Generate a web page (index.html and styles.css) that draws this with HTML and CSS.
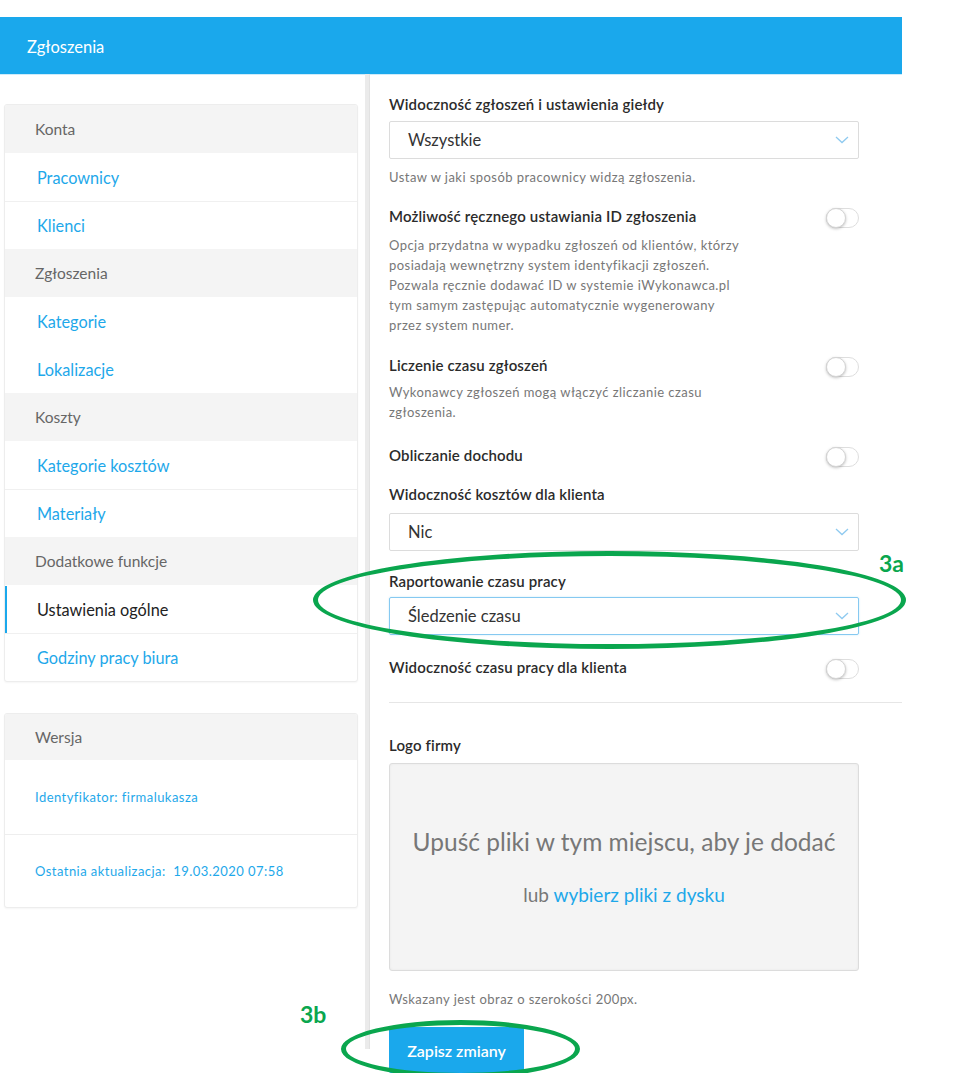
FILE: index.html
```html
<!DOCTYPE html>
<html lang="pl">
<head>
    <meta charset="UTF-8">
    <meta name="viewport" content="width=device-width, initial-scale=1.0">
    <title>Ustawienia ogólne</title>
    <link rel="stylesheet" href="styles.css">
</head>
<body>
<div class="page">
    <div class="topbar">Zgłoszenia</div>

    <div class="layout">
        <aside class="sidebar">
            <div class="card">
                <div class="nav-head">Konta</div>
                <a class="nav-link">Pracownicy</a>
                <a class="nav-link">Klienci</a>
                <div class="nav-head">Zgłoszenia</div>
                <a class="nav-link">Kategorie</a>
                <a class="nav-link no-line">Lokalizacje</a>
                <div class="nav-head">Koszty</div>
                <a class="nav-link">Kategorie kosztów</a>
                <a class="nav-link">Materiały</a>
                <div class="nav-head">Dodatkowe funkcje</div>
                <a class="nav-link active">Ustawienia ogólne</a>
                <a class="nav-link">Godziny pracy biura</a>
            </div>

            <div class="card version">
                <div class="nav-head">Wersja</div>
                <div class="info-row">Identyfikator: firmalukasza</div>
                <div class="info-row">Ostatnia aktualizacja:&nbsp; 19.03.2020 07:58</div>
            </div>
        </aside>

        <div class="divider"></div>

        <main class="main">
            <div class="label">Widoczność zgłoszeń i ustawienia giełdy</div>
            <div class="select s-first">
                <span>Wszystkie</span>
                <svg class="chevron" width="14" height="8" viewBox="0 0 14 8"><path d="M1 1l6 5.5L13 1" fill="none" stroke="#8fcaf0" stroke-width="1.3"/></svg>
            </div>
            <p class="desc help">Ustaw w jaki sposób pracownicy widzą zgłoszenia.</p>

            <div class="setting s-id">
                <div class="label">Możliwość ręcznego ustawiania ID zgłoszenia</div>
                <span class="toggle"></span>
            </div>
            <p class="desc">Opcja przydatna w wypadku zgłoszeń od klientów, którzy<br>posiadają wewnętrzny system identyfikacji zgłoszeń.<br>Pozwala ręcznie dodawać ID w systemie iWykonawca.pl<br>tym samym zastępując automatycznie wygenerowany<br>przez system numer.</p>

            <div class="setting s-time">
                <div class="label">Liczenie czasu zgłoszeń</div>
                <span class="toggle"></span>
            </div>
            <p class="desc desc-short">Wykonawcy zgłoszeń mogą włączyć zliczanie czasu<br>zgłoszenia.</p>

            <div class="setting s-income">
                <div class="label">Obliczanie dochodu</div>
                <span class="toggle"></span>
            </div>

            <div class="label s-costs">Widoczność kosztów dla klienta</div>
            <div class="select s-costs-select">
                <span>Nic</span>
                <svg class="chevron" width="14" height="8" viewBox="0 0 14 8"><path d="M1 1l6 5.5L13 1" fill="none" stroke="#8fcaf0" stroke-width="1.3"/></svg>
            </div>

            <div class="label s-report">Raportowanie czasu pracy</div>
            <div class="select focused s-report-select">
                <span>Śledzenie czasu</span>
                <svg class="chevron" width="14" height="8" viewBox="0 0 14 8"><path d="M1 1l6 5.5L13 1" fill="none" stroke="#8fcaf0" stroke-width="1.3"/></svg>
            </div>

            <div class="setting s-worktime">
                <div class="label">Widoczność czasu pracy dla klienta</div>
                <span class="toggle"></span>
            </div>

            <hr class="rule">

            <div class="label s-logo">Logo firmy</div>
            <div class="dropzone">
                <div class="drop-title">Upuść pliki w tym miejscu, aby je dodać</div>
                <div class="drop-sub">lub <a>wybierz pliki z dysku</a></div>
            </div>
            <p class="desc s-hint">Wskazany jest obraz o szerokości 200px.</p>

            <button class="btn">Zapisz zmiany</button>
        </main>
    </div>

    <!-- annotation marks drawn over the screenshot -->
    <div class="mark mark-a"></div>
    <div class="mark-label label-a">3a</div>
    <div class="mark mark-b"></div>
    <div class="mark-label label-b">3b</div>
</div>
</body>
</html>
```

FILE: styles.css
```css
body {
    margin: 0;
    font-family: Lato, "Open Sans", sans-serif;
    color: #333;
    background: #fff;
}
.page {
    position: relative;
    width: 902px;
    padding-top: 17px;
}
.topbar {
    height: 57px;
    background: #1aa8ec;
    color: #fff;
    font-size: 16.5px;
    display: flex;
    align-items: center;
    padding: 2px 0 0 27px;
    box-sizing: border-box;
    box-shadow: 0 1px 0 #cdebfa;
}
.layout {
    display: grid;
    grid-template-columns: 365px 5px 1fr;
}

/* sidebar */
.sidebar {
    padding: 30px 7px 0 4px;
}
.card {
    background: #fff;
    border: 1px solid #ededed;
    border-radius: 3px;
    box-shadow: 0 1px 2px rgba(0, 0, 0, 0.04);
    overflow: hidden;
}
.nav-head {
    height: 48px;
    background: #f4f4f4;
    color: #666;
    font-size: 15.5px;
    display: flex;
    align-items: center;
    padding-left: 30px;
}
.nav-link {
    display: flex;
    align-items: center;
    box-sizing: border-box;
    height: 48px;
    padding-left: 32px;
    border-top: 1px solid #f0f0f0;
    color: #1ea8ea;
    font-size: 16.3px;
}
.nav-head + .nav-link,
.nav-link.no-line {
    border-top-color: transparent;
}
.nav-link.active {
    color: #222;
    box-shadow: inset 2px 0 0 #1aa8ec;
}
.version {
    margin-top: 31px;
}
.version .nav-head {
    height: 46px;
}
.info-row {
    display: flex;
    align-items: center;
    height: 72px;
    padding-left: 30px;
    border-top: 1px solid #eee;
    color: #1ea8ea;
    font-size: 13px;
    letter-spacing: 0.45px;
}
.nav-head + .info-row {
    border-top: none;
    height: 74px;
}
.divider {
    background: #ebebeb;
    height: 975px;
    box-shadow: inset -1px 0 0 #e2e2e2;
}

/* settings form */
.main {
    padding: 20px 0 0 19px;
}
.label {
    font-size: 15px;
    font-weight: 600;
    line-height: 20px;
    letter-spacing: 0.15px;
    color: #2b2b2b;
}
.select {
    width: 470px;
    height: 38px;
    box-sizing: border-box;
    border: 1px solid #dcdcdc;
    border-radius: 2px;
    display: flex;
    align-items: center;
    justify-content: space-between;
    padding: 0 9px 0 18px;
    font-size: 16.5px;
    color: #333;
}
.select.focused {
    border-color: #86c9f1;
    box-shadow: 0 0 2px rgba(26, 168, 236, 0.25);
}
.s-first { margin-top: 7px; }
.setting {
    width: 470px;
    display: flex;
    justify-content: space-between;
    align-items: flex-start;
}
.toggle {
    position: relative;
    width: 33px;
    height: 20px;
    margin: 2px 0 -2px;
    box-sizing: border-box;
    border: 1px solid #dedede;
    border-radius: 10px;
    background: #fff;
}
.toggle::before {
    content: "";
    position: absolute;
    left: -1px;
    top: -1px;
    width: 20px;
    height: 20px;
    box-sizing: border-box;
    border: 1px solid #d4d4d4;
    border-radius: 50%;
    background: #fff;
    box-shadow: 0 1px 3px rgba(0, 0, 0, 0.25);
}
.desc {
    margin: 9px 0 0;
    font-size: 13px;
    line-height: 20px;
    letter-spacing: 0.45px;
    color: #777;
}
.help {
    line-height: 18px;
}
.desc-short { margin-top: 7px; }
.s-id { margin-top: 20px; }
.s-time { margin-top: 20px; }
.s-income { margin-top: 23px; }
.s-costs { margin-top: 19px; }
.s-costs-select { margin-top: 9px; }
.s-report { margin-top: 20px; }
.s-report-select { margin-top: 6px; }
.s-worktime { margin-top: 22px; }
.rule {
    margin: 25px 0 0;
    border: none;
    border-top: 1px solid #e6e6e6;
}
.s-logo { margin-top: 32px; }
.dropzone {
    width: 470px;
    height: 208px;
    box-sizing: border-box;
    margin-top: 8px;
    background: #f4f4f4;
    border: 1px solid #dcdcdc;
    border-radius: 3px;
    box-shadow: inset 0 0 3px rgba(0, 0, 0, 0.05);
    display: flex;
    flex-direction: column;
    align-items: center;
    justify-content: center;
}
.drop-title {
    font-size: 24.5px;
    line-height: 30px;
    color: #777;
}
.drop-sub {
    margin-top: 25px;
    font-size: 19px;
    line-height: 26px;
    color: #777;
}
.drop-sub a {
    color: #1ea8ea;
}
.s-hint {
    margin-top: 19px;
    line-height: 18px;
}
.btn {
    display: block;
    margin-top: 19px;
    width: 135px;
    height: 46px;
    border: none;
    border-radius: 2px;
    background: #1aa8ec;
    color: #fff;
    font-family: inherit;
    font-size: 16px;
    font-weight: 600;
}

/* annotations */
.mark {
    position: absolute;
    box-sizing: border-box;
    border: 5px solid #0aa64e;
    border-radius: 50%;
}
.mark-a {
    left: 313px;
    top: 551px;
    width: 593px;
    height: 98px;
}
.mark-b {
    left: 341px;
    top: 1020px;
    width: 239px;
    height: 58px;
}
.mark-label {
    position: absolute;
    color: #0aa64e;
    font-size: 23px;
    font-weight: 700;
    line-height: 28px;
}
.label-a {
    left: 879px;
    top: 549px;
}
.label-b {
    left: 300px;
    top: 1000px;
}
```
